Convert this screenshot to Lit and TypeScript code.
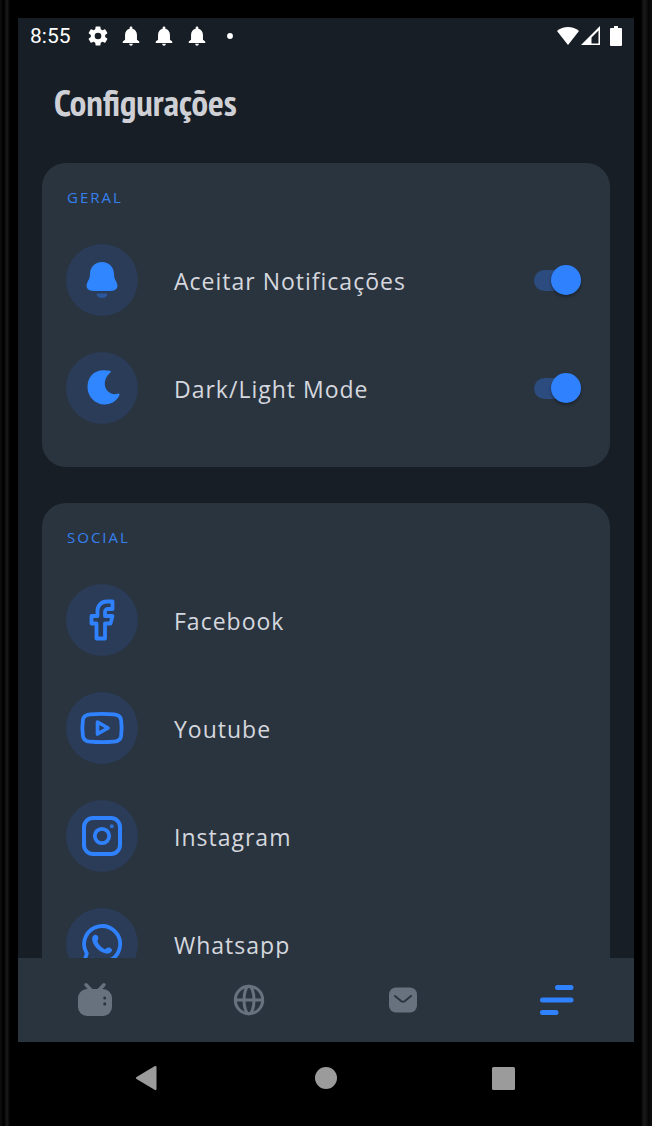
import { LitElement, html, css, svg } from "lit";
import { customElement, property } from "lit/decorators.js";

const icons = {
  bell: svg`<path d="M24 6C31 6 36 11 36 18C36 22.500 37.500 23.500 38.800 27C41 32 37.500 35 32 35H16C10.500 35 7 32 9.200 27C10.500 23.500 12 22.500 12 18C12 11 17 6 24 6Z" fill="#2f86ff"/><path d="M19 37.500H29Q29.500 37.500 29.300 38.500C28.500 41 26.500 42 24 42S19.500 41 18.700 38.500Q18.500 37.500 19 37.500Z" fill="#2b579f"/>`,
  moon: svg`<path d="M32 6.800C16 3.500 9.500 13 9.500 23C9.500 32.500 17 40.500 26.500 40.500C33.500 40.500 39 36.500 41.300 31.500C42 29.800 41 29.300 39.600 29.800C32.500 31.800 26.800 26 26.800 20C26.800 15 29.400 11 32.200 8.800C33.200 7.900 33 7 32 6.800Z" fill="#2f86ff"/>`,
  facebook: svg`<path d="M34.500 5.500H29C23.500 5.500 19.500 9.500 19.500 15V20H13.500V27.500H18.500V42.500H27V27.500H32.500L34.500 20H27V16C27 14.300 28.300 13 30 13H34.500Z" fill="none" stroke="#2f81fd" stroke-width="3.800" stroke-linejoin="round"/>`,
  youtube: svg`<path d="M12 10.300Q24 9.300 36 10.300Q42.500 10.800 43.100 16Q44.200 24 43.100 32Q42.500 37.200 36 37.700Q24 38.700 12 37.700Q5.500 37.200 4.900 32Q3.800 24 4.900 16Q5.500 10.800 12 10.300Z" fill="none" stroke="#2f81fd" stroke-width="3.800"/><path d="M19.500 18L30 24L19.500 30Z" fill="none" stroke="#2f81fd" stroke-width="3.600" stroke-linejoin="round"/>`,
  instagram: svg`<rect x="6" y="6" width="36" height="36" rx="9" fill="none" stroke="#2f81fd" stroke-width="4"/><circle cx="24" cy="24" r="7.200" fill="none" stroke="#2f81fd" stroke-width="3.800"/><circle cx="33.800" cy="14.200" r="2" fill="#2f6fd6"/>`,
  whatsapp: svg`<path d="M6 42L8.800 33.500A18 18 0 1 1 15.200 39.700Z" fill="none" stroke="#2f81fd" stroke-width="3.800" stroke-linejoin="round"/><path d="M17.200 14.800C19.500 14.500 20.500 17 20.300 18.500C20.200 19.800 19 20.500 19.600 22C21 25 23.500 27.500 26.300 29C28 29.700 28.500 27.500 30.500 27.600C32 27.800 34.500 29 34 30.500C33.300 32.800 30.500 34 28 33.500C21.500 32.200 15 26 14.200 19.500C13.900 17 15.200 15 17.200 14.800Z" fill="#2f81fd"/>`,
};

type IconName = keyof typeof icons;

@customElement("settings-row")
class SettingsRow extends LitElement {
  @property() icon: IconName = "bell";
  @property() label = "";
  @property({ type: Boolean }) toggle = false;

  static styles = css`
    :host { display: block; }
    .row {
      display: flex;
      align-items: center;
      gap: 36px;
      width: 100%;
      height: 72px;
      color: #d5d7de;
      text-decoration: none;
      font: 23px/36px "Open Sans", sans-serif;
      letter-spacing: 1px;
    }
    .badge {
      flex: none;
      display: grid;
      place-items: center;
      width: 72px;
      height: 72px;
      border-radius: 50%;
      background: #2b3c58;
    }
    .badge svg { width: 48px; height: 48px; }
    .text { flex: 1; padding-top: 2px; }
    .switch {
      appearance: none;
      flex: none;
      display: flex;
      align-items: center;
      justify-content: flex-start;
      width: 47px;
      height: 21px;
      margin: 0 5px 0 0;
      border-radius: 12px;
      background: #2c4b7f;
    }
    .switch::before {
      content: "";
      width: 30px;
      height: 30px;
      border-radius: 50%;
      background: #8b95a3;
      box-shadow: 0 2px 3px rgb(0 0 0 / 35%);
    }
    .switch:checked { justify-content: flex-end; }
    .switch:checked::before { background: #2f81fd; }
  `;

  render() {
    const content = html`
      <span class="badge"><svg viewBox="0 0 48 48" aria-hidden="true">${icons[this.icon]}</svg></span>
      <span class="text">${this.label}</span>`;
    return this.toggle
      ? html`<label class="row">${content}<input class="switch" type="checkbox" role="switch" checked /></label>`
      : html`<a class="row" href="#">${content}</a>`;
  }
}

@customElement("app-root")
class AppRoot extends LitElement {
  static styles = css`
    :host { display: block; }
    * { box-sizing: border-box; }
    .device {
      display: flex;
      flex-direction: column;
      height: 100vh;
      padding: 18px 18px 0;
      background:
        linear-gradient(90deg, #0c0c0c 0 1px, #000 3px 4px, #1b1b1b 7px, #000 10px) left / 12px 100% no-repeat,
        linear-gradient(270deg, #0c0c0c 0 1px, #050505 3px, #1b1b1b 8px, #000 11px) right / 12px 100% no-repeat,
        #000;
    }
    .screen {
      flex: 1;
      min-height: 0;
      display: flex;
      flex-direction: column;
      background: #181e25;
    }
    .status {
      flex: none;
      display: flex;
      align-items: center;
      justify-content: space-between;
      height: 36px;
      padding: 0 12px;
      color: #fff;
      font: 21px/38px Roboto, sans-serif;
    }
    .status svg { fill: currentColor; display: block; }
    .notices { display: flex; align-items: center; gap: 11px; }
    .time { margin-right: 5px; }
    .signals { display: flex; align-items: center; gap: 2px; }
    .battery { margin-left: 7px; }
    h1 {
      flex: none;
      margin: 0;
      padding: 24px 36px 37px;
      color: #ced0d5;
      font: bold 37px/48px "PT Sans Narrow", "Open Sans Condensed", "Roboto Condensed", "Liberation Sans Narrow", Lato, sans-serif;
    }
    main {
      flex: 1;
      min-height: 0;
      overflow: hidden;
      padding: 0 24px;
      display: flex;
      flex-direction: column;
      gap: 36px;
    }
    section {
      flex: none;
      display: flex;
      flex-direction: column;
      gap: 36px;
      padding: 24px 24px 43px;
      border-radius: 24px;
      background: #2a343f;
    }
    h2 {
      margin: 0;
      padding-left: 1px;
      color: #3580ee;
      font: 15px/21px "Open Sans", sans-serif;
      letter-spacing: 2px;
    }
    .tabs {
      flex: none;
      display: grid;
      grid-template-columns: repeat(4, 1fr);
      height: 84px;
      background: #2a343f;
    }
    .keys {
      flex: none;
      display: flex;
      justify-content: center;
      gap: 105px;
      height: 84px;
      padding-bottom: 12px;
    }
    button {
      display: grid;
      place-items: center;
      padding: 0;
      border: 0;
      background: none;
      color: #68727f;
    }
    .keys button { width: 72px; color: #9b9b9b; }
    .tabs .active { color: #2f81fd; }
    button svg { display: block; width: 40px; height: 40px; fill: currentColor; }
    .line { fill: none; stroke: currentColor; }
    .cut { fill: none; stroke: #2a343f; }
  `;

  private notice() {
    return html`<svg width="22" height="22" viewBox="0 0 24 24" aria-hidden="true"><path d="M12 22.500a2 2 0 0 0 2-2h-4a2 2 0 0 0 2 2zm6.500-6.500v-5c0-3.400-1.800-6.100-5-6.800V3a1.500 1.500 0 0 0-3 0v1.200C7.300 4.900 5.500 7.600 5.500 11v5L3 18v1.500h18V18z"/></svg>`;
  }

  render() {
    return html`
      <div class="device">
        <div class="screen">
          <div class="status">
            <div class="notices">
              <span class="time">8:55</span>
              <svg width="22" height="22" viewBox="1 1 22 22" aria-hidden="true"><path d="M19.140 12.940c.04-.3.060-.61.060-.94s-.02-.64-.07-.94l2.030-1.580a.49.49 0 0 0 .12-.61l-1.920-3.320a.49.49 0 0 0-.59-.22l-2.390.96a7 7 0 0 0-1.620-.94l-.36-2.540a.48.48 0 0 0-.48-.41h-3.840a.47.47 0 0 0-.47.410l-.36 2.540c-.59.24-1.130.57-1.620.94l-2.390-.96a.48.48 0 0 0-.59.220L2.740 8.870a.47.47 0 0 0 .12.610l2.030 1.580c-.05.3-.09.63-.09.94s.02.64.070.94l-2.030 1.580a.49.49 0 0 0-.12.610l1.920 3.320c.12.220.37.290.59.220l2.390-.96c.5.380 1.030.7 1.620.94l.36 2.540c.05.240.24.410.48.410h3.840c.24 0 .44-.17.470-.41l.36-2.540a7 7 0 0 0 1.620-.94l2.390.96c.22.080.47 0 .59-.22l1.920-3.320a.47.47 0 0 0-.12-.61zM12 15.300a3.300 3.300 0 1 1 0-6.600 3.300 3.300 0 0 1 0 6.600z"/></svg>
              ${this.notice()}${this.notice()}${this.notice()}
              <svg width="22" height="22" viewBox="0 0 24 24" aria-hidden="true"><circle cx="12" cy="12" r="3.200"/></svg>
            </div>
            <div class="signals">
              <svg width="22" height="20" viewBox="0 0 22 20" aria-hidden="true"><path d="M11 19L0 5C3 2.500 7 1 11 1S19 2.500 22 5Z"/></svg>
              <svg width="20" height="20" viewBox="0 0 20 20" aria-hidden="true"><path fill-rule="evenodd" d="M0 19L19 0V19ZM10.500 11.500V17.500H17.500V4.500Z"/></svg>
              <svg class="battery" width="12" height="20" viewBox="0 0 12 20" aria-hidden="true"><path d="M4 0H8V2H11Q12 2 12 3V19Q12 20 11 20H1Q0 20 0 19V3Q0 2 1 2H4Z"/></svg>
            </div>
          </div>
          <h1>Configurações</h1>
          <main>
            <section>
              <h2>GERAL</h2>
              <settings-row icon="bell" label="Aceitar Notificações" toggle></settings-row>
              <settings-row icon="moon" label="Dark/Light Mode" toggle></settings-row>
            </section>
            <section>
              <h2>SOCIAL</h2>
              <settings-row icon="facebook" label="Facebook"></settings-row>
              <settings-row icon="youtube" label="Youtube"></settings-row>
              <settings-row icon="instagram" label="Instagram"></settings-row>
              <settings-row icon="whatsapp" label="Whatsapp"></settings-row>
            </section>
          </main>
          <nav class="tabs">
            <button aria-label="TV"><svg viewBox="0 0 40 40"><rect x="3" y="9" width="34" height="27" rx="9"/><path class="line" stroke-width="3.400" stroke-linecap="round" d="M11 4.800L17 11M29 4.800L23 11"/><path class="cut" stroke-width="3" stroke-linecap="round" d="M29.700 18V18.100M29.700 23.800V23.900"/></svg></button>
            <button aria-label="Web"><svg viewBox="0 0 40 40"><g class="line" stroke-width="3"><circle cx="20" cy="20" r="13.700"/><ellipse cx="20" cy="20" rx="5" ry="13.700"/><path d="M7 20H33"/></g></svg></button>
            <button aria-label="Mail"><svg viewBox="0 0 40 40"><rect x="6" y="7.500" width="28" height="25" rx="7"/><path class="cut" stroke-width="2" stroke-linecap="round" d="M12 16L18 21Q20 22.500 22 21L28 16"/></svg></button>
            <button class="active" aria-label="Menu"><svg viewBox="0 0 40 40"><path class="line" stroke-width="5" stroke-linecap="round" d="M20.500 7.500H34M5.500 20H34M5.500 32.500H19"/></svg></button>
          </nav>
        </div>
        <nav class="keys">
          <button aria-label="Back"><svg viewBox="0 0 40 40"><path d="M7.500 19Q6 20 7.500 21L26 32Q27.500 32.500 27.500 31V9Q27.500 7.500 26 8Z"/></svg></button>
          <button aria-label="Home"><svg viewBox="0 0 40 40"><circle cx="20" cy="20" r="11"/></svg></button>
          <button aria-label="Recents"><svg viewBox="0 0 40 40"><rect x="9" y="9" width="23" height="23" rx="1.500"/></svg></button>
        </nav>
      </div>`;
  }
}
